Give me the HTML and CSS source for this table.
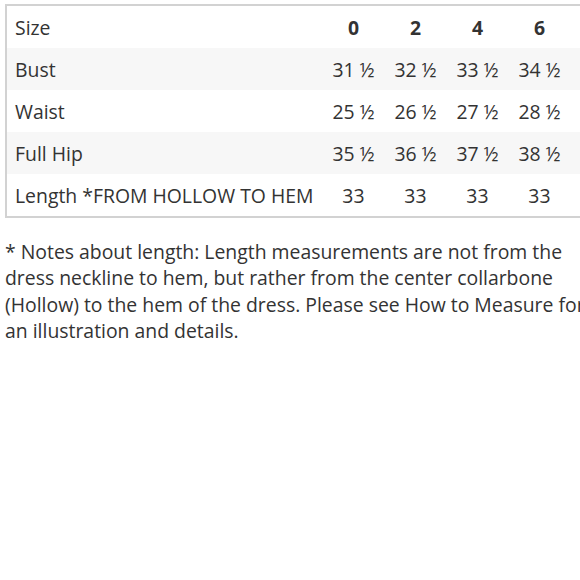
FILE: index.html
```html
<!DOCTYPE html>
<html>
<head>
<meta charset="utf-8">
<link rel="stylesheet" href="styles.css">
</head>
<body>
<div class="page">
  <table class="sizes">
    <tr class="head">
      <td class="label">Size</td>
      <td class="num">0</td><td class="num">2</td><td class="num">4</td><td class="num">6</td><td class="num">8</td><td class="num">10</td>
    </tr>
    <tr class="alt">
      <td class="label">Bust</td>
      <td class="num">31 ½</td><td class="num">32 ½</td><td class="num">33 ½</td><td class="num">34 ½</td><td class="num">35 ½</td><td class="num">36 ½</td>
    </tr>
    <tr>
      <td class="label">Waist</td>
      <td class="num">25 ½</td><td class="num">26 ½</td><td class="num">27 ½</td><td class="num">28 ½</td><td class="num">29 ½</td><td class="num">30 ½</td>
    </tr>
    <tr class="alt">
      <td class="label">Full Hip</td>
      <td class="num">35 ½</td><td class="num">36 ½</td><td class="num">37 ½</td><td class="num">38 ½</td><td class="num">39 ½</td><td class="num">40 ½</td>
    </tr>
    <tr>
      <td class="label">Length *FROM HOLLOW TO HEM</td>
      <td class="num">33</td><td class="num">33</td><td class="num">33</td><td class="num">33</td><td class="num">33</td><td class="num">33</td>
    </tr>
  </table>
  <p class="notes">* Notes about length: Length measurements are not from the<br>dress neckline to hem, but rather from the center collarbone<br>(Hollow) to the hem of the dress. Please see How to Measure for<br>an illustration and details.</p>
</div>
</body>
</html>
```

FILE: styles.css
```css
html, body {
  margin: 0;
  padding: 0;
  background: #fff;
  overflow: hidden;
}
body {
  width: 580px;
  height: 580px;
  font-family: "Open Sans", sans-serif;
  color: #333;
}
.page {
  padding: 4px 0 0 5px;
  width: 900px;
}
.sizes {
  border-collapse: collapse;
  border: 2px solid #d2d2d2;
  font-size: 19.4px;
}
.sizes td {
  height: 42px;
  padding: 0;
  white-space: nowrap;
  vertical-align: middle;
}
.sizes .label {
  padding: 0 9px 0 8px;
  text-align: left;
}
.sizes .num {
  width: 62px;
  text-align: center;
}
.head .num {
  font-weight: 700;
}
.alt td {
  background: #f7f7f7;
}
.notes {
  margin: 21px 0 0 0;
  font-size: 19.4px;
  line-height: 26.3px;
  white-space: nowrap;
}
```
